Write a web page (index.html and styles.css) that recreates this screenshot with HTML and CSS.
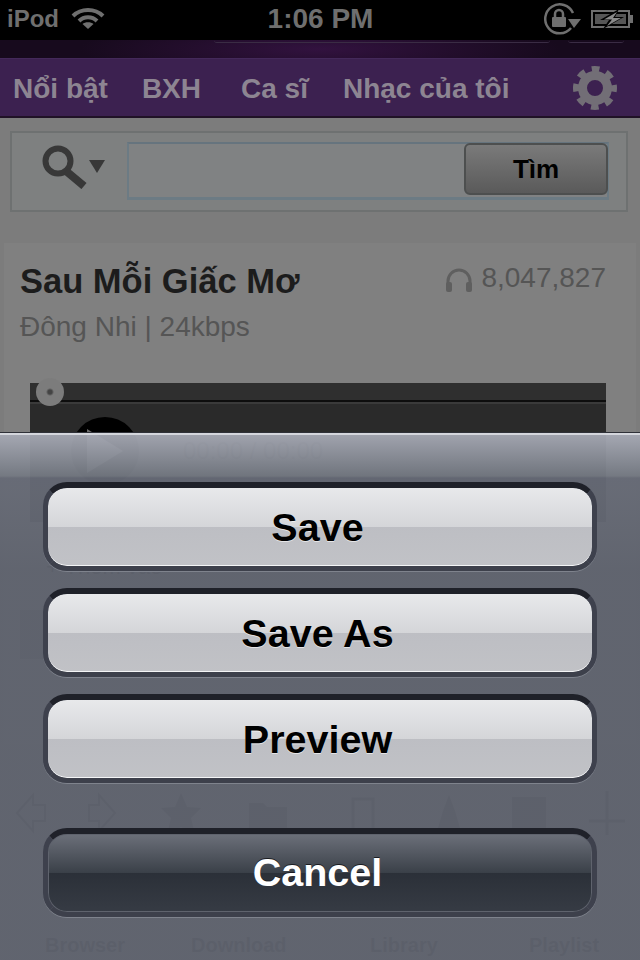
FILE: index.html
```html
<!DOCTYPE html>
<html lang="en">
<head>
    <meta charset="UTF-8">
    <meta name="viewport" content="width=device-width, initial-scale=1.0">
    <title>Sau Mỗi Giấc Mơ</title>
    <link rel="stylesheet" href="styles.css">
</head>
<body>
    <div class="screen">
        <div class="status-bar">
            <div class="status-left">
                <span>iPod</span>
                <svg class="wifi" width="34" height="22" viewBox="0 0 34 22">
                    <path d="M2 8 C10 0 24 0 32 8" fill="none" stroke="#6f6f6f" stroke-width="4"/>
                    <path d="M8 13 C13 8 21 8 26 13" fill="none" stroke="#6f6f6f" stroke-width="4"/>
                    <path d="M17 21 L11.500 16 C14 13.500 20 13.500 22.500 16 Z" fill="#6f6f6f"/>
                </svg>
            </div>
            <div class="status-time">1:06 PM</div>
            <div class="status-right">
                <svg width="38" height="32" viewBox="0 0 38 32">
                    <path d="M27 24 A14.500 14.500 0 1 1 29 9" fill="none" stroke="#6f6f6f" stroke-width="2.500" transform="translate(0 1)"/>
                    <path d="M24 16 L37 16 L30 25 Z" fill="#6f6f6f"/>
                    <path d="M11 14 V11 A4 4 0 0 1 19 11 V14" fill="none" stroke="#6f6f6f" stroke-width="2.500"/>
                    <rect x="8" y="14" width="14" height="10" rx="1" fill="#6f6f6f"/>
                </svg>
                <svg width="43" height="18" viewBox="0 0 43 18">
                    <rect x="1" y="1" width="37" height="16" fill="none" stroke="#6f6f6f" stroke-width="2"/>
                    <rect x="39" y="5" width="3" height="8" fill="#6f6f6f"/>
                    <rect x="4" y="4" width="31" height="10" fill="#565656"/>
                    <path d="M28 -1 L9 10 H18 L12 19 L33 7 H24 Z" fill="#000"/>
                    <path d="M26 2 L13 9.500 H21 L16 16 L30 8 H22 Z" fill="#8a8a8a"/>
                </svg>
            </div>
        </div>
        <div class="strip">
            <div class="strip-field"></div>
            <div class="strip-button"></div>
        </div>
        <nav class="tabs">
            <span class="tab tab-first">Nổi bật</span>
            <span class="tab tab-bxh">BXH</span>
            <span class="tab">Ca sĩ</span>
            <span class="tab">Nhạc của tôi</span>
            <svg class="gear" width="46" height="46" viewBox="0 0 46 46">
                <circle cx="23" cy="23" r="18.500" fill="none" stroke="#726e76" stroke-width="7" stroke-dasharray="7.500 7.030" stroke-dashoffset="3.750"/>
                <circle cx="23" cy="23" r="12.500" fill="none" stroke="#726e76" stroke-width="9"/>
            </svg>
        </nav>

        <section class="search-panel">
            <svg class="search-icon" width="64" height="44" viewBox="0 0 64 44">
                <circle cx="16" cy="16" r="12.500" fill="none" stroke="#383838" stroke-width="6"/>
                <path d="M24 26 L42 41" stroke="#383838" stroke-width="8"/>
                <path d="M47 15 H63 L55 28 Z" fill="#383838"/>
            </svg>
            <div class="search-input">
                <div class="search-button">Tìm</div>
            </div>
        </section>

        <section class="song-card">
            <div class="song-head">
                <h1 class="song-title">Sau Mỗi Giấc Mơ</h1>
                <div class="song-plays">
                    <svg width="28" height="25" viewBox="0 0 28 25">
                        <path d="M3 17 V13 A11 11 0 0 1 25 13 V17" fill="none" stroke="#5f5f5f" stroke-width="3"/>
                        <rect x="1" y="14" width="6" height="10" rx="2" fill="#5f5f5f"/>
                        <rect x="21" y="14" width="6" height="10" rx="2" fill="#5f5f5f"/>
                    </svg>
                    <span>8,047,827</span>
                </div>
            </div>
            <p class="song-meta">Đông Nhi | 24kbps</p>
            <div class="player">
                <div class="player-track"></div>
                <div class="player-knob"></div>
                <div class="player-controls">
                    <div class="play-button"><div class="play-arrow"></div></div>
                    <span class="player-time">00:00 / 00:00</span>
                </div>
            </div>
            <div class="add-row">+ Thêm vào</div>
            <div class="video-row">Video</div>
            <div class="lyric-row">Xem lời bài</div>
        </section>

        <div class="toolbar">
            <svg width="610" height="48" viewBox="0 0 610 48">
                <path d="M2 22 L18 4 V14 H30 V30 H18 V40 Z" fill="none" stroke="#333" stroke-width="2"/>
                <path d="M100 22 L84 4 V14 H74 V30 H84 V40 Z" fill="none" stroke="#333" stroke-width="2"/>
                <path d="M166 2 L172 16 L186 17 L176 27 L180 44 L166 36 L152 44 L156 27 L146 17 L160 16 Z" fill="#333"/>
                <path d="M234 12 H248 L252 16 H272 V44 H234 Z" fill="#333"/>
                <path d="M338 8 H358 V44 H338 Z" fill="none" stroke="#333" stroke-width="3"/>
                <path d="M434 4 L440 20 L447 44 H421 L428 20 Z" fill="#333"/>
                <rect x="497" y="6" width="34" height="38" fill="#333"/>
                <path d="M592 0 V44 M574 30 H610" stroke="#333" stroke-width="3"/>
            </svg>
            <div class="toolbar-labels">
                <span class="toolbar-browser">Browser</span>
                <span class="toolbar-download">Download</span>
                <span class="toolbar-library">Library</span>
                <span>Playlist</span>
            </div>
        </div>

        <div class="sheet">
            <button class="sheet-btn">Save</button>
            <button class="sheet-btn">Save As</button>
            <button class="sheet-btn">Preview</button>
            <button class="sheet-btn sheet-cancel">Cancel</button>
        </div>
    </div>
</body>
</html>
```

FILE: styles.css
```css
* {
    box-sizing: border-box;
}
body {
    margin: 0;
    background-color: #7c7c7c;
    font-family: "Liberation Sans", Arial, sans-serif;
}
.screen {
    position: relative;
    width: 640px;
    height: 960px;
    overflow: hidden;
    background-color: #7c7c7c;
}

/* status bar */
.status-bar {
    display: flex;
    align-items: center;
    justify-content: space-between;
    height: 40px;
    padding: 0 6px 2px 7px;
    background-color: #000;
    color: #6f6f6f;
    font-weight: bold;
}
.status-left {
    display: flex;
    align-items: center;
    gap: 12px;
    width: 200px;
    font-size: 24px;
}
.status-time {
    font-size: 28px;
}
.status-right {
    display: flex;
    align-items: center;
    justify-content: flex-end;
    gap: 9px;
    width: 200px;
}
.strip {
    display: flex;
    align-items: flex-start;
    height: 18px;
    padding-left: 214px;
    background: radial-gradient(ellipse 240px 30px at 50% 50%, #32123f, #170a1d);
}
.strip-field {
    width: 336px;
    height: 3px;
    border-bottom: 1px solid #3a2c44;
    border-radius: 0 0 6px 6px;
}
.strip-button {
    width: 56px;
    height: 3px;
    margin-left: 18px;
    border-bottom: 1px solid #3a2c44;
    border-radius: 0 0 6px 6px;
}

/* tabs */
.tabs {
    display: flex;
    align-items: center;
    gap: 35px;
    height: 60px;
    padding: 2px 22px 0 13px;
    border-top: 1px solid #44295a;
    border-bottom: 2px solid #201226;
    background-color: #3c2150;
    color: #8d8592;
    font-size: 28px;
    font-weight: bold;
}
.tab-first {
    margin-right: -1px;
}
.tab-bxh {
    margin-right: 5px;
}
.gear {
    margin: -2px 0 0 auto;
    filter: blur(0.6px);
}

/* search */
.search-panel {
    display: flex;
    align-items: flex-start;
    height: 81px;
    margin: 13px 12px 0 10px;
    padding: 9px 17px 0 30px;
    border: 2px solid #6e7171;
    background-color: #7e8080;
}
.search-icon {
    flex: none;
    margin-top: 3px;
}
.search-input {
    display: flex;
    flex: 1;
    justify-content: flex-end;
    height: 58px;
    margin-left: 21px;
    border-top: 2px solid #66747e;
    border-right: 2px solid #6c7b84;
    border-bottom: 3px solid #6c7b84;
    border-left: 2px solid #6c7b84;
    background-color: #808283;
}
.search-button {
    display: flex;
    align-items: center;
    justify-content: center;
    width: 144px;
    height: 52px;
    margin: -1px -1px 0 0;
    padding-top: 1px;
    border: 2px solid #4d4f4f;
    border-radius: 6px;
    background: linear-gradient(#7a7a7a, #5a5a5a);
    color: #000;
    font-size: 26px;
    font-weight: bold;
}

/* song card */
.song-card {
    margin: 31px 4px 0;
    padding: 0 30px 0 16px;
    background-color: #808080;
}
.song-head {
    display: flex;
    align-items: flex-start;
    justify-content: space-between;
    padding-top: 20px;
}
.song-title {
    margin: 0;
    color: #1c1c1c;
    font-size: 34.500px;
    line-height: 37px;
}
.song-plays {
    display: flex;
    align-items: flex-end;
    gap: 8px;
    color: #555;
    font-size: 28px;
    line-height: 30px;
}
.song-meta {
    margin: 12px 0 0;
    color: #555;
    font-size: 28px;
    line-height: 30px;
}
.player {
    position: relative;
    height: 139px;
    margin: 41px 0 0 10px;
    background-color: #2a2a2a;
}
.player-track {
    height: 21px;
    border-bottom: 2px solid #3a3a3a;
    background: linear-gradient(#2f2f2f 17px, #0d0d0d 17px);
}
.player-knob {
    position: absolute;
    top: -5px;
    left: 6px;
    width: 28px;
    height: 28px;
    border-radius: 50%;
    background: radial-gradient(circle, #444 0 2px, #7c7c7c 4px);
    filter: blur(0.6px);
}
.player-controls {
    display: flex;
    align-items: center;
    padding: 13px 0 0 41px;
}
.play-button {
    display: flex;
    align-items: center;
    justify-content: center;
    width: 68px;
    height: 68px;
    border-radius: 50%;
    background-color: #000;
}
.play-arrow {
    width: 0;
    height: 0;
    border-top: 22px solid transparent;
    border-bottom: 22px solid transparent;
    border-left: 36px solid #6a6a6a;
}
.player-time {
    margin-left: 44px;
    color: #000;
    font-size: 24px;
}
.add-row {
    margin-top: 32px;
    padding-left: 26px;
    color: #222;
    font-size: 22px;
}
.video-row {
    width: 480px;
    margin-top: 30px;
    padding: 9px 0 9px 55px;
    background-color: #555;
    color: #222;
    font-size: 26px;
}
.lyric-row {
    margin-top: 54px;
    padding-left: 85px;
    color: #222;
    font-size: 26px;
}

/* toolbar underneath the sheet */
.toolbar {
    margin: 47px 0 0 15px;
}
.toolbar-labels {
    display: flex;
    margin-top: 91px;
    padding-left: 30px;
    color: #1c1c1c;
    font-size: 20px;
    font-weight: bold;
}
.toolbar-browser {
    width: 146px;
}
.toolbar-download {
    width: 179px;
}
.toolbar-library {
    width: 159px;
}

/* action sheet */
.sheet {
    position: absolute;
    top: 432px;
    right: 0;
    bottom: 0;
    left: 0;
    display: flex;
    flex-direction: column;
    gap: 17px;
    padding: 50px 43px 0;
    background:
        linear-gradient(#2f3138 1px, #d4d6dc 1px, #d4d6dc 3px, rgba(166, 169, 180, 0.95) 3px, rgba(116, 121, 130, 0.95) 44px, rgba(102, 106, 118, 0.95) 46px, rgba(102, 106, 117, 0.95) 60px, rgba(95, 99, 110, 0.95) 140px);
}
.sheet-btn {
    display: flex;
    align-items: center;
    justify-content: center;
    flex: none;
    height: 89px;
    padding: 0 5px 0 0;
    border-width: 6px 5px 5px;
    border-style: solid;
    border-color: #1f2129 #3e414d #3d404b;
    border-radius: 24px;
    background: linear-gradient(rgba(236, 237, 239, 0.97), rgba(216, 217, 220, 0.97) 50%, rgba(192, 193, 198, 0.97) 50%, rgba(196, 197, 201, 0.97));
    box-shadow: 0 1px 0 #7f838d, inset 0 -1px 0 #f4f5f6;
    background-clip: padding-box;
    color: #000;
    font-family: "Liberation Sans", Arial, sans-serif;
    font-size: 39.500px;
    font-weight: bold;
    text-shadow: 0 1px 0 rgba(255, 255, 255, 0.6);
}
.sheet-cancel {
    margin-top: 28px;
    padding-bottom: 2px;
    background: linear-gradient(#6c707a, #3a4048 50%, #2b3038 50%, #363b44);
    background-clip: padding-box;
    box-shadow: 0 1px 0 #7f838d, inset 0 0 0 1px #5f636d;
    color: #fff;
    text-shadow: 0 -1px 0 #1a1c22;
}
```
